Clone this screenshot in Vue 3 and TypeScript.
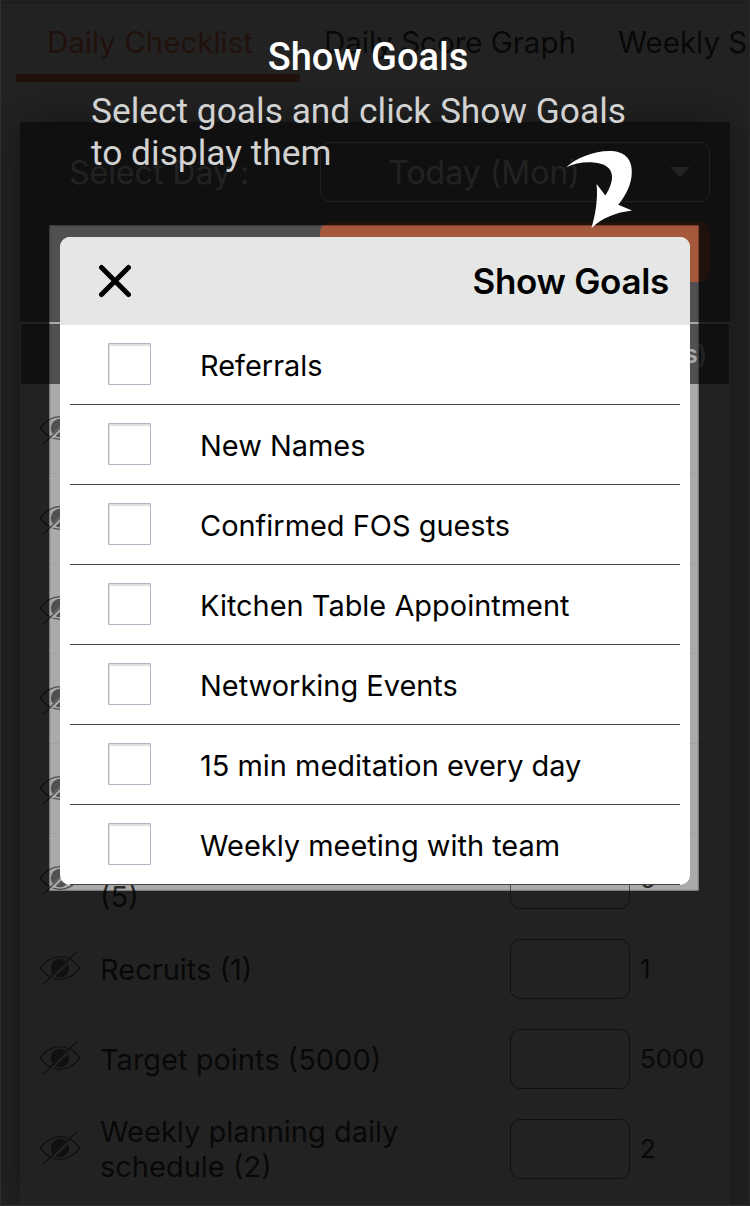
<script setup lang="ts">
interface GoalRow {
  label: string
  value: string
  tall?: boolean
}

const tabs: string[] = ['Daily Checklist', 'Daily Score Graph', 'Weekly Score']

const rows: GoalRow[] = [
  { label: '', value: '' },
  { label: '', value: '' },
  { label: '', value: '' },
  { label: '', value: '' },
  { label: '', value: '' },
  { label: '(5)', value: '5', tall: true },
  { label: 'Recruits (1)', value: '1' },
  { label: 'Target points (5000)', value: '5000' },
  { label: 'Weekly planning daily schedule (2)', value: '2' },
]

const goals: string[] = [
  'Referrals',
  'New Names',
  'Confirmed FOS guests',
  'Kitchen Table Appointment',
  'Networking Events',
  '15 min meditation every day',
  'Weekly meeting with team',
]
</script>

<template>
  <div class="screen">
    <nav class="tabs">
      <span v-for="(tab, i) in tabs" :key="tab" class="tab" :class="{ active: i === 0 }">{{ tab }}</span>
    </nav>

    <section class="card">
      <div class="panel">
        <div class="day-row">
          <span class="day-label">Select Day :</span>
          <div class="select">
            <span>Today (Mon)</span>
            <i class="caret"></i>
          </div>
        </div>
        <div class="action"></div>
      </div>
      <div class="table-head">s)</div>
      <div v-for="(row, i) in rows" :key="i" class="row">
        <svg class="eye" viewBox="0 0 42 36">
          <path d="M1 18Q10 6.7 21 6.7T41 18Q32 29.3 21 29.3T1 18Z" fill="none" stroke="currentColor" stroke-width="1.3" />
          <circle cx="21" cy="18" r="9.2" fill="currentColor" />
          <path class="gap" d="M12.6 27.4L31 9.6" />
          <path d="M4.2 34.2L38 1.6" fill="none" stroke="currentColor" stroke-width="1.4" />
        </svg>
        <span class="label" :class="{ tall: row.tall }">{{ row.label }}</span>
        <span class="field"></span>
        <span class="value">{{ row.value }}</span>
      </div>
    </section>

    <div class="frame"></div>
    <div class="spotlight"></div>

    <section class="dialog">
      <header class="dialog-head">
        <svg class="close" viewBox="0 0 34 34">
          <path d="M3.5 3.5L30.5 30.5M30.5 3.5L3.5 30.5" stroke="#000" stroke-width="5" stroke-linecap="round" />
        </svg>
        <h2>Show Goals</h2>
      </header>
      <label v-for="goal in goals" :key="goal" class="goal">
        <span class="box"></span>
        <span class="goal-name">{{ goal }}</span>
      </label>
    </section>

    <div class="hint">
      <h1>Show Goals</h1>
      <p>Select goals and click Show Goals<br />to display them</p>
    </div>
    <svg class="arrow" viewBox="0 0 80 90">
      <path
        d="M6.2 22.4C16 13 34 6 49 6C65 6 71.8 14 71.8 27C71.8 39 66 50 58.3 59.7L72 65.6C56 67.5 42 73 31.4 83.2C35.6 69 38 54 36.6 39L45.4 50.5C50 43 52.2 37 52 31C51.5 21 41 17.3 29 17.3C21 17.3 13 19 6.2 22.4Z"
        fill="#fff"
      />
    </svg>
  </div>
</template>

<style>
body {
  margin: 0;
}
</style>

<style scoped>
.screen {
  position: relative;
  box-sizing: border-box;
  width: 750px;
  height: 1206px;
  overflow: hidden;
  padding-top: 2px;
  background: #aaa;
  font-family: Inter, 'Liberation Sans', sans-serif;
  color: #2c2c2c;
}
.frame {
  position: absolute;
  inset: 0;
  border-left: 1px solid #e4e4e4;
  border-right: 1px solid #c8c8c8;
  border-bottom: 1px solid #e4e4e4;
}
.tabs {
  display: flex;
  box-sizing: border-box;
  height: 80px;
  padding-left: 16px;
  border-top: 1px solid #808080;
  border-bottom: 1px solid #9c9c9c;
}
.tab {
  box-sizing: border-box;
  height: 79px;
  margin-right: 42px;
  font-size: 29.5px;
  line-height: 78px;
  white-space: nowrap;
}
.tab.active {
  width: 284px;
  flex: none;
  margin-right: 24px;
  padding-left: 31px;
  color: #a5583c;
  border-bottom: 8px solid #a5583c;
}
.card {
  margin: 40px 0 0 20px;
  width: 710px;
  height: 1090px;
  background: #aaa;
  box-shadow: 0 0 40px rgba(0, 0, 0, 0.4);
}
.panel {
  box-sizing: border-box;
  height: 200px;
  padding: 20px 20px 0 49px;
  background: #505050;
}
.day-row {
  display: flex;
  justify-content: space-between;
  align-items: center;
}
.day-label {
  font-size: 32px;
  color: #aaa;
}
.select {
  display: flex;
  align-items: center;
  justify-content: flex-end;
  gap: 90px;
  box-sizing: border-box;
  width: 390px;
  height: 60px;
  padding-right: 19px;
  border: 1px solid #aaa;
  border-radius: 10px;
  font-size: 32px;
  color: #aaa;
}
.caret {
  border: 10px solid transparent;
  border-top-color: #aaa;
  border-bottom: 0;
}
.action {
  width: 390px;
  height: 60px;
  margin: 20px 0 0 251px;
  border-radius: 10px;
  background: #a5583c;
}
.table-head {
  box-sizing: border-box;
  height: 60px;
  margin: 2px 1px 0;
  padding-right: 22px;
  background: #505050;
  color: #aaa;
  font-size: 25px;
  font-weight: 600;
  line-height: 61px;
  text-align: right;
}
.row {
  display: flex;
  align-items: center;
  box-sizing: border-box;
  height: 90px;
  padding-left: 19px;
  border-bottom: 1px solid #a0a0a0;
}
.eye {
  flex: none;
  width: 42px;
  height: 36px;
  margin-top: -2px;
  color: #505050;
}
.gap {
  fill: none;
  stroke: #aaa;
  stroke-width: 3.8;
}
.label {
  width: 330px;
  margin-left: 19px;
  margin-right: 80px;
  padding-top: 1px;
  font-size: 29px;
  line-height: 35px;
}
.label.tall {
  padding-top: 35px;
}
.field {
  box-sizing: border-box;
  flex: none;
  width: 120px;
  height: 60px;
  border: 1px solid #505050;
  border-radius: 10px;
}
.value {
  margin-left: 10px;
  font-size: 25.8px;
}
.spotlight {
  position: absolute;
  left: 49px;
  top: 225px;
  width: 650px;
  height: 666px;
  box-shadow: 0 0 0 1300px rgba(0, 0, 0, 0.8), inset 0 0 2px #000;
}
.dialog {
  position: absolute;
  left: 60px;
  top: 237px;
  width: 630px;
  height: 648px;
  border-radius: 10px;
  overflow: hidden;
  background: #fff;
  color: #000;
}
.dialog-head {
  display: flex;
  align-items: center;
  justify-content: space-between;
  box-sizing: border-box;
  height: 88px;
  padding: 0 21px 0 38px;
  background: #e5e7e6;
}
.close {
  width: 34px;
  height: 34px;
}
.dialog-head h2 {
  margin: 0;
  font-size: 35px;
  font-weight: 600;
  letter-spacing: -0.3px;
}
.goal {
  display: flex;
  align-items: center;
  box-sizing: border-box;
  height: 80px;
  margin: 0 10px;
  padding-left: 38px;
  border-bottom: 1px solid #444;
  font-size: 28.95px;
}
.goal-name {
  padding-top: 2px;
}
.box {
  box-sizing: border-box;
  width: 43px;
  height: 42px;
  margin-top: -2px;
  margin-right: 49px;
  border: 1px solid #b0b5c3;
  border-radius: 1px;
  box-shadow: inset 1px 2px 1px #ddd;
}
.hint {
  position: absolute;
  left: 0;
  top: 35px;
  width: 736px;
  font-family: Roboto, sans-serif;
}
.hint h1 {
  margin: 0;
  font-size: 38px;
  font-weight: 500;
  line-height: 44px;
  text-align: center;
  color: #fff;
}
.hint p {
  margin: 11px 0 0 91px;
  font-size: 35.35px;
  line-height: 42px;
  color: #d2d2d2;
}
.arrow {
  position: absolute;
  left: 560px;
  top: 145px;
  width: 80px;
  height: 90px;
}
</style>
